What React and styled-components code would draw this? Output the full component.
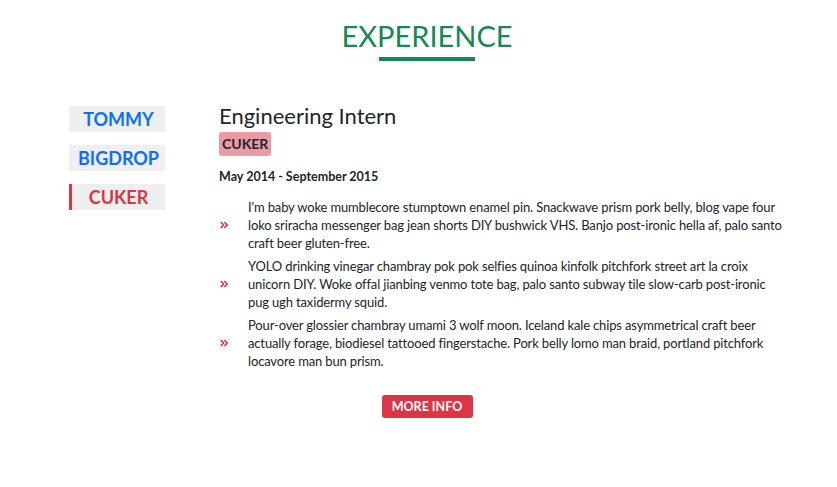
import React, { useState } from 'react';
import styled, { createGlobalStyle } from 'styled-components';

const GlobalStyle = createGlobalStyle`
  body {
    margin: 0;
    background: #fff;
    font-family: Lato, 'Noto Sans', sans-serif;
    color: #212529;
  }
`;

const jobs = [
  {
    company: 'TOMMY',
    title: 'Full Stack Web Developer',
    dates: 'December 2015 - Present',
    duties: [],
  },
  {
    company: 'BIGDROP',
    title: 'Front-End Engineer',
    dates: 'May 2015 - December 2015',
    duties: [],
  },
  {
    company: 'CUKER',
    title: 'Engineering Intern',
    dates: 'May 2014 - September 2015',
    duties: [
      "I'm baby woke mumblecore stumptown enamel pin. Snackwave prism pork belly, blog vape four loko sriracha messenger bag jean shorts DIY bushwick VHS. Banjo post-ironic hella af, palo santo craft beer gluten-free.",
      'YOLO drinking vinegar chambray pok pok selfies quinoa kinfolk pitchfork street art la croix unicorn DIY. Woke offal jianbing venmo tote bag, palo santo subway tile slow-carb post-ironic pug ugh taxidermy squid.',
      'Pour-over glossier chambray umami 3 wolf moon. Iceland kale chips asymmetrical craft beer actually forage, biodiesel tattooed fingerstache. Pork belly lomo man braid, portland pitchfork locavore man bun prism.',
    ],
  },
];

const App = () => {
  const [value, setValue] = useState(2);
  const job = jobs[value];
  return (
    <>
      <GlobalStyle />
      <Section>
        <TitleBlock>
          <Title>EXPERIENCE</Title>
          <Underline />
        </TitleBlock>
        <JobsCenter>
          <BtnContainer>
            {jobs.map((j, i) => (
              <JobBtn key={j.company} $active={i === value} onClick={() => setValue(i)}>
                {j.company}
              </JobBtn>
            ))}
          </BtnContainer>
          <JobInfo>
            <JobTitle>{job.title}</JobTitle>
            <Company>{job.company}</Company>
            <JobDate>{job.dates}</JobDate>
            {job.duties.map((d, i) => (
              <Desc key={i}>
                <Chevron viewBox="0 0 16 16">
                  <path
                    d="M2.8 3.2 L7.4 8 L2.8 12.8 M8.6 3.2 L13.2 8 L8.6 12.8"
                    fill="none"
                    stroke="#dc3545"
                    strokeWidth="2.6"
                  />
                </Chevron>
                <p>{d}</p>
              </Desc>
            ))}
          </JobInfo>
        </JobsCenter>
        <MoreBtn type="button">MORE INFO</MoreBtn>
      </Section>
    </>
  );
};

export default App;

const Section = styled.section`
  width: 837px;
  box-sizing: border-box;
  padding: 18px 0 40px 17px;
  display: flex;
  flex-direction: column;
  align-items: center;
`;
const TitleBlock = styled.div`
  display: flex;
  flex-direction: column;
  align-items: center;
  margin-bottom: 42px;
`;
const Title = styled.h2`
  margin: 0;
  font-size: 29px;
  font-weight: 400;
  line-height: 36px;
  color: #198754;
`;
const Underline = styled.div`
  width: 96px;
  height: 4px;
  background: #198754;
  margin-top: 3px;
`;
const JobsCenter = styled.div`
  align-self: stretch;
  display: flex;
  padding-left: 52px;
  gap: 54px;
`;
const BtnContainer = styled.div`
  display: flex;
  flex-direction: column;
  gap: 13px;
  width: 96px;
  flex-shrink: 0;
  padding-top: 3px;
`;
const JobBtn = styled.button`
  height: 26px;
  width: 96px;
  border: none;
  border-left: 3px solid ${p => (p.$active ? '#dc3545' : 'transparent')};
  background: #efefef;
  color: ${p => (p.$active ? '#dc3545' : '#0d6efd')};
  font-family: inherit;
  font-size: 18px;
  font-weight: 700;
  padding: 0;
  cursor: pointer;
`;
const JobInfo = styled.article`
  width: 570px;
`;
const JobTitle = styled.h3`
  margin: 0;
  font-size: 22px;
  font-weight: 400;
  line-height: 26px;
  color: #212529;
`;
const Company = styled.h4`
  display: inline-block;
  margin: 3px 0 0;
  padding: 0 3px;
  font-size: 14px;
  font-weight: 700;
  line-height: 24px;
  background: #ea9aa2;
  border-radius: 3px;
  color: #212529;
`;
const JobDate = styled.p`
  margin: 13px 0 13px;
  font-size: 12.5px;
  font-weight: 700;
  line-height: 16px;
`;
const Desc = styled.div`
  display: flex;
  align-items: center;
  margin-bottom: 5px;
  p {
    margin: 0 0 0 19px;
    width: 534px;
    font-size: 13px;
    letter-spacing: -0.15px;
    line-height: 18px;
    color: #212529;
  }
`;
const Chevron = styled.svg`
  width: 10px;
  height: 10px;
  flex-shrink: 0;
`;
const MoreBtn = styled.button`
  margin-top: 20px;
  height: 23px;
  width: 91px;
  padding: 0;
  background: #dc3545;
  border: none;
  border-radius: 3px;
  color: #fff;
  font-family: inherit;
  font-size: 12.5px;
  font-weight: 700;
  cursor: pointer;
`;
